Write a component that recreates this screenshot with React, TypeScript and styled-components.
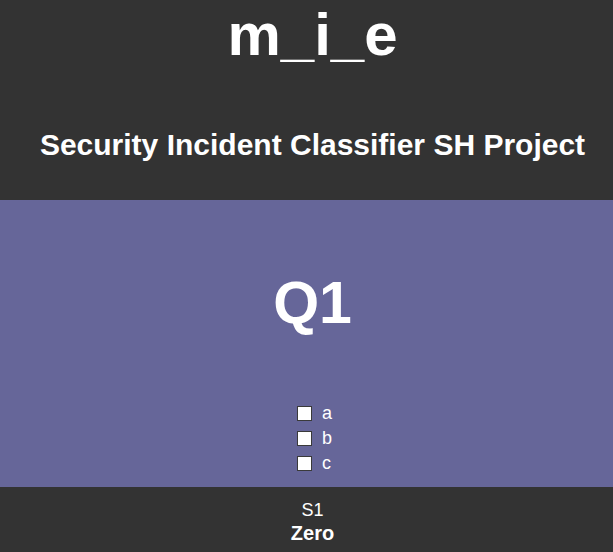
import React from 'react';
import styled, { createGlobalStyle } from 'styled-components';

const GlobalStyle = createGlobalStyle`
  html, body {
    margin: 0;
    padding: 0;
    background: #333333;
    font-family: "Liberation Sans", Arial, sans-serif;
    color: #ffffff;
  }
`;

const Header = styled.header`
  background: #333333;
  height: 200px;
  padding-left: 12px;
  box-sizing: border-box;
  display: flex;
  flex-direction: column;
  align-items: center;
`;

const Logo = styled.h1`
  margin: 0;
  font-size: 60px;
  font-weight: bold;
  line-height: 70px;
`;

const Title = styled.h2`
  margin: 57px 0 0 0;
  font-size: 30px;
  font-weight: bold;
  line-height: 36px;
`;

const Main = styled.main`
  background: #666699;
  height: 287px;
  padding-left: 12px;
  box-sizing: border-box;
  display: flex;
  flex-direction: column;
  align-items: center;
`;

const Question = styled.h3`
  margin: 68px 0 0 0;
  font-size: 59px;
  font-weight: bold;
  line-height: 70px;
`;

const Options = styled.div`
  margin: 64px 0 0 4px;
  display: flex;
  flex-direction: column;
  gap: 3px;
`;

const Option = styled.label`
  display: flex;
  align-items: center;
  gap: 10px;
  font-size: 18px;
  line-height: 22px;
`;

const Box = styled.input`
  appearance: none;
  margin: 0;
  width: 15px;
  height: 15px;
  background: #ffffff;
  border: 1px solid #3a3a3a;
  box-sizing: border-box;
`;

const Footer = styled.footer`
  background: #333333;
  height: 65px;
  padding: 12px 0 0 12px;
  box-sizing: border-box;
  display: flex;
  flex-direction: column;
  align-items: center;
  font-size: 18px;
  line-height: 22px;
`;

const Score = styled.strong`
  font-size: 20px;
  line-height: 24px;
  font-weight: bold;
`;

const App: React.FC = () => {
  const options = ['a', 'b', 'c'];
  return (
    <>
      <GlobalStyle />
      <Header>
        <Logo>m_i_e</Logo>
        <Title>Security Incident Classifier SH Project</Title>
      </Header>
      <Main>
        <Question>Q1</Question>
        <Options>
          {options.map((o) => (
            <Option key={o}>
              <Box type="checkbox" />
              {o}
            </Option>
          ))}
        </Options>
      </Main>
      <Footer>
        <span>S1</span>
        <Score>Zero</Score>
      </Footer>
    </>
  );
};

export default App;
